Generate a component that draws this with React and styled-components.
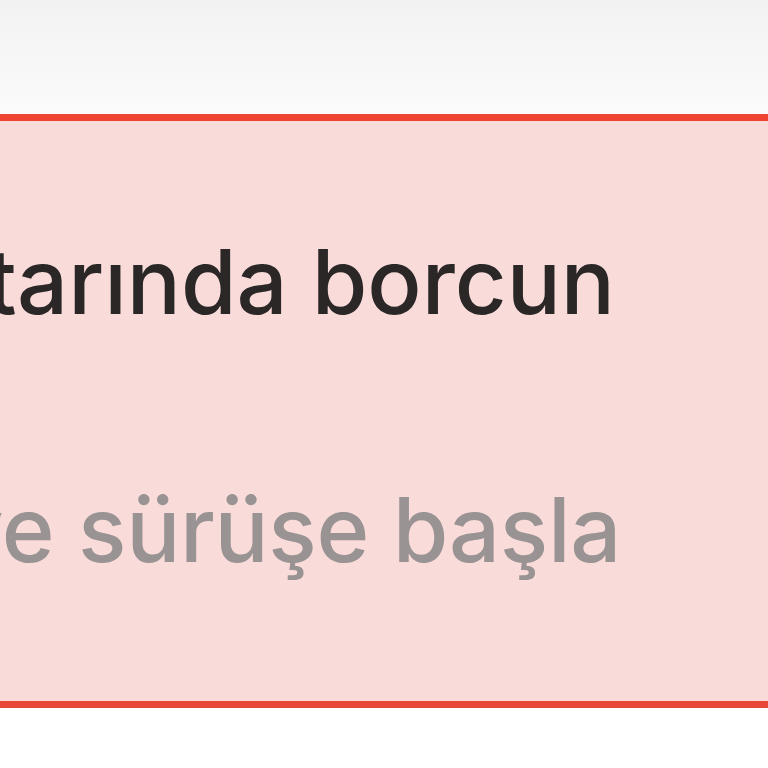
import React from 'react';
import styled, { createGlobalStyle } from 'styled-components';

const GlobalStyle = createGlobalStyle`
  html, body {
    margin: 0;
    padding: 0;
    background: #ffffff;
    overflow: hidden;
  }
  body {
    font-family: Inter, "Noto Sans", sans-serif;
  }
`;

const Page = styled.div`
  width: 768px;
  height: 768px;
  display: flex;
  flex-direction: column;
  background: #ffffff;
  overflow: hidden;
`;

const TopBar = styled.header`
  height: 114px;
  flex-shrink: 0;
  background: linear-gradient(180deg, #f2f2f2 0%, #fbfbfb 100%);
`;

const Notice = styled.section`
  height: 594px;
  flex-shrink: 0;
  box-sizing: border-box;
  background: #f9dcda;
  border-top: 7px solid #ef4433;
  border-bottom: 7px solid #e9463a;
  display: flex;
  flex-direction: column;
  padding-top: 101px;
  overflow: hidden;
`;

const Line = styled.p`
  margin: 0 0 0 ${(props) => props.$shift}px;
  font-family: Inter, "Noto Sans", sans-serif;
  font-size: ${(props) => props.$size}px;
  font-weight: 500;
  line-height: 120px;
  white-space: nowrap;
  letter-spacing: ${(props) => props.$track}px;
  color: ${(props) => props.$color};
  & + & {
    margin-top: 128px;
  }
`;

const App = () => (
  <>
    <GlobalStyle />
    <Page>
      <TopBar />
      <Notice>
        <Line $shift={-14} $size={90} $track={0} $color="#2b2727">
          tarında borcun
        </Line>
        <Line $shift={-48} $size={90} $track={-0.3} $color="#999393">
          ve sürüşe başla
        </Line>
      </Notice>
    </Page>
  </>
);

export default App;
